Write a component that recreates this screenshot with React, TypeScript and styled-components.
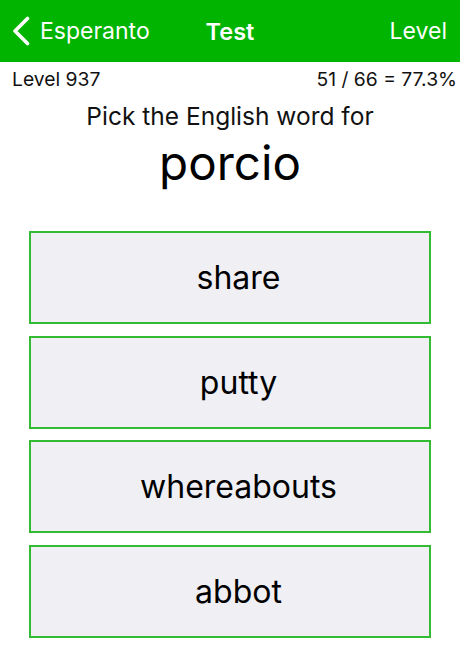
import React from "react";
import styled, { createGlobalStyle } from "styled-components";

const Global = createGlobalStyle`
  html, body { margin: 0; padding: 0; background: #ffffff; }
  body { font-family: Inter, "Noto Sans", "Liberation Sans", sans-serif; -webkit-font-smoothing: antialiased; }
  * { box-sizing: border-box; }
`;

const Page = styled.div`
  width: 460px;
  height: 661px;
  display: flex;
  flex-direction: column;
  background: #ffffff;
  overflow: hidden;
`;

const NavBar = styled.header`
  height: 62px;
  background: #00b400;
  display: grid;
  grid-template-columns: 1fr auto 1fr;
  align-items: center;
  padding: 0 13px 0 12px;
  color: #ffffff;
`;

const BackButton = styled.div`
  display: flex;
  align-items: center;
  gap: 10px;
  font-size: 23px;
  font-weight: 400;
`;

const Title = styled.div`
  font-size: 23.5px;
  font-weight: 600;
  text-align: center;
  padding-left: 1px;
`;

const RightAction = styled.div`
  font-size: 23px;
  font-weight: 400;
  text-align: right;
`;

const StatsRow = styled.div`
  display: flex;
  justify-content: space-between;
  align-items: center;
  padding: 4px 3px 0 12px;
  font-size: 19.3px;
  color: #111111;
  height: 30px;
`;

const Prompt = styled.div`
  text-align: center;
  font-size: 24.5px;
  color: #111111;
  margin-top: 9px;
  line-height: 30px;
`;

const Word = styled.div`
  text-align: center;
  font-size: 47.5px;
  color: #000000;
  line-height: 56px;
  margin-top: 4px;
`;

const Choices = styled.div`
  display: flex;
  flex-direction: column;
  gap: 11.7px;
  padding: 0 29px;
  margin-top: 40px;
`;

const Choice = styled.button`
  height: 93px;
  width: 100%;
  background: #efeff4;
  border: 2px solid #33bb33;
  border-radius: 0;
  font-family: inherit;
  font-size: 32px;
  color: #000000;
  display: flex;
  align-items: center;
  justify-content: center;
  padding: 0 0 0 17px;
`;

const Chevron = () => (
  <svg width="18" height="30" viewBox="0 0 18 30" fill="none">
    <path d="M15.5 2.5 L3 15 L15.5 27.5" stroke="#ffffff" strokeWidth="3.6" strokeLinecap="round" strokeLinejoin="round" />
  </svg>
);

const words = ["share", "putty", "whereabouts", "abbot"];

export default function App() {
  return (
    <>
      <Global />
      <Page>
        <NavBar>
          <BackButton>
            <Chevron />
            Esperanto
          </BackButton>
          <Title>Test</Title>
          <RightAction>Level</RightAction>
        </NavBar>
        <StatsRow>
          <span>Level 937</span>
          <span>51 / 66 = 77.3%</span>
        </StatsRow>
        <Prompt>Pick the English word for</Prompt>
        <Word>porcio</Word>
        <Choices>
          {words.map((w) => (
            <Choice key={w}>{w}</Choice>
          ))}
        </Choices>
      </Page>
    </>
  );
}
